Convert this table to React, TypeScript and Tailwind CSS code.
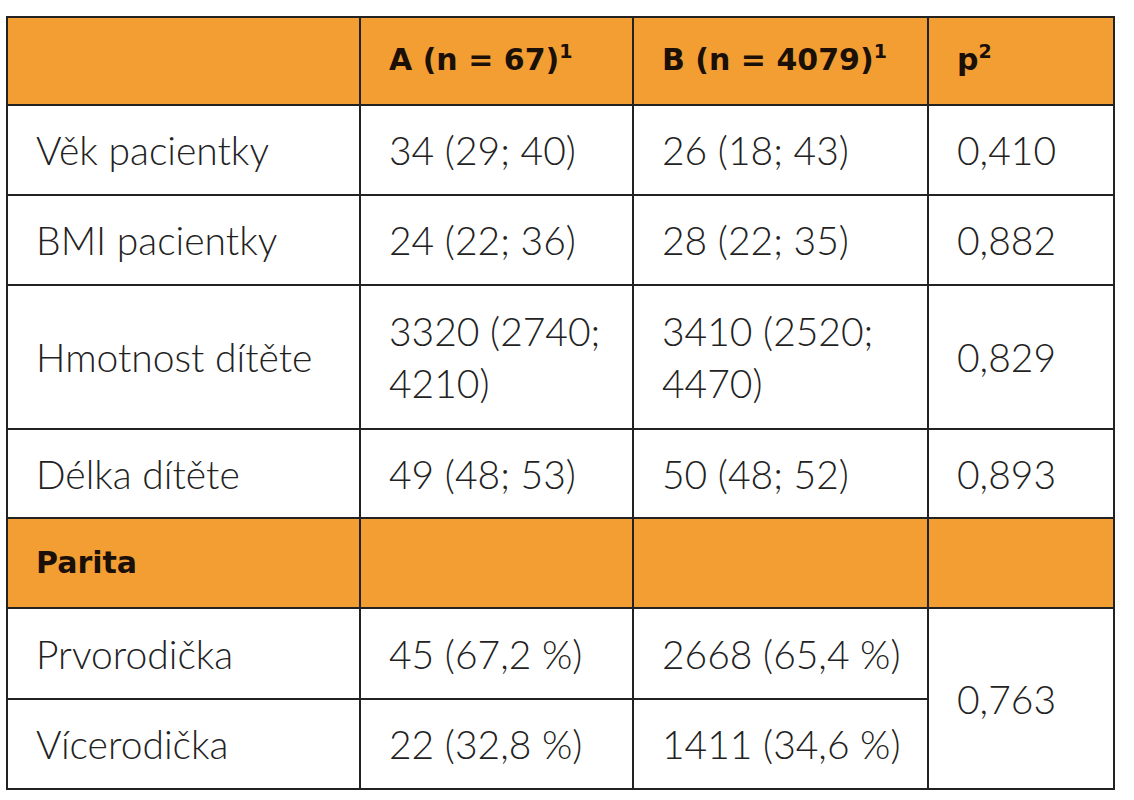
import React from "react";

const rows: { label: string; a: string[]; b: string[]; p: string; h: string }[] = [
  { label: "Věk pacientky", a: ["34 (29; 40)"], b: ["26 (18; 43)"], p: "0,410", h: "h-[90px]" },
  { label: "BMI pacientky", a: ["24 (22; 36)"], b: ["28 (22; 35)"], p: "0,882", h: "h-[90px]" },
  { label: "Hmotnost dítěte", a: ["3320 (2740;", "4210)"], b: ["3410 (2520;", "4470)"], p: "0,829", h: "h-[144px]" },
  { label: "Délka dítěte", a: ["49 (48; 53)"], b: ["50 (48; 52)"], p: "0,893", h: "h-[89px]" },
];

const td = "border-2 border-[#222222] pl-[28px] align-middle";
const head = "h-[88px] bg-[#F39E33] text-[#1a1008] font-bold text-[30px]";
const headFont = { fontFamily: "'DejaVu Sans', Verdana, sans-serif" };

function Sup({ children }: { children: React.ReactNode }) {
  return <span className="relative -top-[12px] text-[19px] font-bold">{children}</span>;
}

export default function App() {
  return (
    <div className="w-[1134px] h-[800px] bg-white pt-[16px] pl-[6px]" style={{ fontFamily: "Lato, 'Open Sans', sans-serif" }}>
      <table className="border-collapse border-2 border-[#222222] text-[#222222] text-[39px] leading-[52px] font-light">
        <colgroup>
          <col className="w-[353px]" />
          <col className="w-[273px]" />
          <col className="w-[295px]" />
          <col className="w-[186px]" />
        </colgroup>
        <tbody>
          <tr className={head} style={headFont}>
            <td className={td}></td>
            <td className={td}>A (n = 67)<Sup>1</Sup></td>
            <td className={td}>B (n = 4079)<Sup>1</Sup></td>
            <td className={td}>p<Sup>2</Sup></td>
          </tr>
          {rows.map((r) => (
            <tr key={r.label} className={r.h}>
              <td className={td}>{r.label}</td>
              <td className={td}>{r.a.map((l) => <div key={l}>{l}</div>)}</td>
              <td className={td}>{r.b.map((l) => <div key={l}>{l}</div>)}</td>
              <td className={td}>{r.p}</td>
            </tr>
          ))}
          <tr className="h-[90px] bg-[#F39E33] text-[#1a1008] font-bold text-[30px]" style={headFont}>
            <td className={td}>Parita</td>
            <td className={td}></td>
            <td className={td}></td>
            <td className={td}></td>
          </tr>
          <tr className="h-[91px]">
            <td className={td}>Prvorodička</td>
            <td className={td}>45 (67,2 %)</td>
            <td className={td}>2668 (65,4 %)</td>
            <td className={td} rowSpan={2}>0,763</td>
          </tr>
          <tr className="h-[90px]">
            <td className={td}>Vícerodička</td>
            <td className={td}>22 (32,8 %)</td>
            <td className={td}>1411 (34,6 %)</td>
          </tr>
        </tbody>
      </table>
    </div>
  );
}
